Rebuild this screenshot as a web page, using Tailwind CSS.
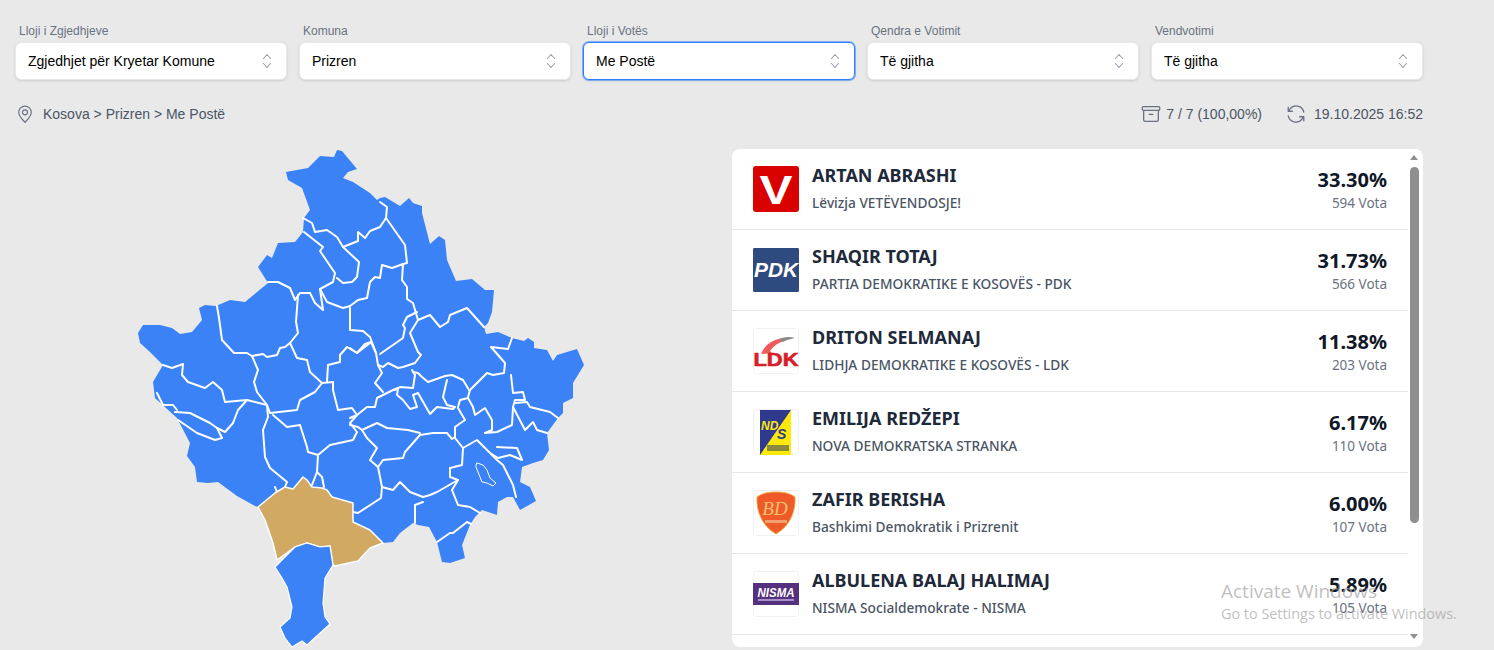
<!DOCTYPE html>
<html lang="en">
<head>
  <meta charset="UTF-8">
  <meta name="viewport" content="width=device-width, initial-scale=1.0">
  <title>Rezultatet</title>
  <script src="https://cdn.jsdelivr.net/npm/@tailwindcss/browser@4"></script>
</head>
<body class="bg-[#e9e9e9] h-[650px] overflow-hidden font-['Liberation_Sans',sans-serif]">
<div class="relative w-[1494px] h-[650px] overflow-hidden pl-[15px] pt-[24px]">

  <!-- filters -->
  <div class="grid grid-cols-5 gap-3 w-[1408px]">
    <div>
      <div class="text-xs leading-[14px] text-gray-500 px-1 mb-[4px]">Lloji i Zgjedhjeve</div>
      <button class="w-full h-[38px] bg-white rounded-md border border-gray-200 shadow-sm flex items-center justify-between pl-3 pr-[11px] text-sm text-black">
        <span>Zgjedhjet për Kryetar Komune</span>
        <svg class="w-[16px] h-[20px] text-gray-400" viewBox="0 0 16 20" fill="none" stroke="currentColor" stroke-width="1.100" stroke-linecap="round" stroke-linejoin="round"><path d="M4.500 7.500 8 3.500l3.500 4M4.500 12.500l3.500 4 3.500-4"/></svg>
      </button>
    </div>
    <div>
      <div class="text-xs leading-[14px] text-gray-500 px-1 mb-[4px]">Komuna</div>
      <button class="w-full h-[38px] bg-white rounded-md border border-gray-200 shadow-sm flex items-center justify-between pl-3 pr-[11px] text-sm text-black">
        <span>Prizren</span>
        <svg class="w-[16px] h-[20px] text-gray-400" viewBox="0 0 16 20" fill="none" stroke="currentColor" stroke-width="1.100" stroke-linecap="round" stroke-linejoin="round"><path d="M4.500 7.500 8 3.500l3.500 4M4.500 12.500l3.500 4 3.500-4"/></svg>
      </button>
    </div>
    <div>
      <div class="text-xs leading-[14px] text-gray-500 px-1 mb-[4px]">Lloji i Votës</div>
      <button class="w-full h-[38px] bg-white rounded-md border border-blue-500 ring-1 ring-blue-500/50 shadow-sm flex items-center justify-between pl-3 pr-[11px] text-sm text-black">
        <span>Me Postë</span>
        <svg class="w-[16px] h-[20px] text-gray-400" viewBox="0 0 16 20" fill="none" stroke="currentColor" stroke-width="1.100" stroke-linecap="round" stroke-linejoin="round"><path d="M4.500 7.500 8 3.500l3.500 4M4.500 12.500l3.500 4 3.500-4"/></svg>
      </button>
    </div>
    <div>
      <div class="text-xs leading-[14px] text-gray-500 px-1 mb-[4px]">Qendra e Votimit</div>
      <button class="w-full h-[38px] bg-white rounded-md border border-gray-200 shadow-sm flex items-center justify-between pl-3 pr-[11px] text-sm text-black">
        <span>Të gjitha</span>
        <svg class="w-[16px] h-[20px] text-gray-400" viewBox="0 0 16 20" fill="none" stroke="currentColor" stroke-width="1.100" stroke-linecap="round" stroke-linejoin="round"><path d="M4.500 7.500 8 3.500l3.500 4M4.500 12.500l3.500 4 3.500-4"/></svg>
      </button>
    </div>
    <div>
      <div class="text-xs leading-[14px] text-gray-500 px-1 mb-[4px]">Vendvotimi</div>
      <button class="w-full h-[38px] bg-white rounded-md border border-gray-200 shadow-sm flex items-center justify-between pl-3 pr-[11px] text-sm text-black">
        <span>Të gjitha</span>
        <svg class="w-[16px] h-[20px] text-gray-400" viewBox="0 0 16 20" fill="none" stroke="currentColor" stroke-width="1.100" stroke-linecap="round" stroke-linejoin="round"><path d="M4.500 7.500 8 3.500l3.500 4M4.500 12.500l3.500 4 3.500-4"/></svg>
      </button>
    </div>
  </div>

  <!-- breadcrumb and status -->
  <div class="w-[1408px] h-[20px] mt-[24px] flex items-center justify-between text-sm text-gray-600">
    <div class="flex items-center gap-[8px]">
      <svg class="w-[20px] h-[20px] text-gray-500" viewBox="0 0 24 24" fill="none" stroke="currentColor" stroke-width="1.400" stroke-linecap="round" stroke-linejoin="round"><path d="M19.500 10c0 5.500-5.500 9.500-7.500 12C10 19.500 4.500 15.500 4.500 10a7.500 7.500 0 0 1 15 0z"/><circle cx="12" cy="10" r="3"/></svg>
      <span>Kosova &gt; Prizren &gt; Me Postë</span>
    </div>
    <div class="flex items-center">
      <svg class="w-[22px] h-[22px] text-gray-500 mr-[4px]" viewBox="0 0 24 24" fill="none" stroke="currentColor" stroke-width="1.400" stroke-linecap="round" stroke-linejoin="round"><rect x="2.500" y="4" width="19" height="4" rx="1"/><path d="M4 8v10.500A1.500 1.500 0 0 0 5.500 20h13a1.500 1.500 0 0 0 1.500-1.500V8M10 12.500h4"/></svg>
      <span>7 / 7 (100,00%)</span>
      <svg class="w-[22px] h-[22px] text-gray-500 ml-[23px] mr-[7px]" viewBox="0 0 24 24" fill="none" stroke="currentColor" stroke-width="1.400" stroke-linecap="round" stroke-linejoin="round"><path d="M20.500 10A8.500 8.500 0 0 0 5.500 6.500L3.500 9M3.500 4.500V9H8M3.500 14a8.500 8.500 0 0 0 15 3.500l2-2.500M20.500 19.500V15H16"/></svg>
      <span>19.10.2025 16:52</span>
    </div>
  </div>

  <!-- map + results -->
  <div class="flex gap-3 mt-[25px]">
    <svg class="w-[705px] h-[501px] shrink-0" viewBox="15 149 705 501">
      <!-- country outline -->
      <polygon fill="#3b82f6" points="286,172 308,168 320,156 334,157 337,150 342,151 357,169 348,172 343,178 353,182 370,193 377,200 380,198 385,197 400,206 409,198 413,203 422,206 422,213 430,244 439,236 445,240 447,260 456,281 472,279 485,290 494,290 492,312 488,323 484,327 486,334 498,332 505,335 512,338 524,341 528,338 534,342 534,348 547,350 553,361 557,355 577,349 584,365 573,383 573,398 563,403 563,413 558,418 547,433 549,450 543,460 533,463 522,467 520,482 530,487 536,501 520,510 513,497 507,497 498,502 497,515 482,510 475,517 470,525 462,545 465,558 450,563 442,562 437,542 429,527 418,525 413,523 400,533 393,542 383,543 370,548 358,561 337,566 300,560 258,507 255,506 237,496 218,482 208,483 197,482 195,467 187,456 190,443 177,418 155,398 153,382 163,365 150,352 140,343 138,333 143,325 160,325 172,328 180,334 192,332 202,320 199,308 205,305 216,306 230,300 245,302 268,283 258,267 267,255 272,258 278,243 295,242 303,232 304,218 310,210 302,188 288,180"/>
      <!-- municipal borders -->
      <g fill="none" stroke="#fff" stroke-width="2" stroke-linejoin="round" stroke-linecap="round">
        <polyline points="303,218 312,223 315,232 327,230 337,237 343,247 358,241 358,232 365,238 370,231 380,227 386,218 387,207 380,202"/>
        <polyline points="304,232 323,247 320,251 335,273 333,282 320,289 327,302 343,308 350,306 358,300 367,298 370,282 375,277 380,278 382,265 392,268 403,264 402,280 407,287 407,299 413,303 418,320"/>
        <polyline points="343,247 359,262 357,277 352,282 343,283 337,278"/>
        <polyline points="386,218 405,245 407,263 403,264"/>
        <polyline points="268,282 278,282 290,288 295,300 300,293 310,293 315,303 323,310 320,289"/>
        <polyline points="298,295 296,322 298,333 290,343 285,347 280,348 277,355 267,357 263,354 252,356 247,353 234,353 222,340 219,318 217,306"/>
        <polyline points="290,343 297,358 307,360 310,372 322,383 333,382"/>
        <polyline points="370,343 357,353 347,347 340,355 340,362 328,365 327,382"/>
        <polyline points="350,308 350,330 363,331 370,337 376,353 378,365 382,373 375,383 383,392"/>
        <polyline points="350,348 357,353 365,344 371,342 376,353"/>
        <polyline points="380,354 403,338 405,328 403,325 407,317 417,312"/>
        <polyline points="418,320 410,333 418,352 421,355 415,363 403,367 398,368 388,363 383,367 378,365"/>
        <polyline points="418,320 430,315 440,327 448,322 450,315 467,308 484,327"/>
        <polyline points="512,338 508,349 491,347 505,363 504,373 493,375 487,373 470,390 468,397"/>
        <polyline points="413,372 418,373 422,377 428,382 445,376 452,375 463,380 469,390"/>
        <polyline points="412,370 415,375 413,388 400,387 395,390"/>
        <polyline points="350,418 357,415 367,407 375,407 377,398 393,390 398,388 397,395 403,400 410,409 417,407 413,395 418,393 430,414 437,407 453,409 455,407 447,405 443,397 447,380"/>
        <polyline points="458,407 460,400 468,398 473,407 475,415 485,408 492,420 492,430 485,433 497,432 512,425 513,407 515,400 525,400 523,392 513,393 511,375"/>
        <polyline points="515,403 527,402 530,407 550,412 558,418"/>
        <polyline points="513,407 525,430 533,422 537,430 547,433"/>
        <polyline points="458,408 465,420 455,427 455,438 463,448 477,440 490,453 497,460 503,465 513,485 516,497"/>
        <polyline points="497,447 517,448 522,460 510,455 498,458 490,453"/>
        <polyline points="463,448 462,465 450,468 450,477 458,480 452,490 458,505 470,507 480,513"/>
        <polyline points="458,480 437,492 430,495 423,497 410,492 400,482 393,490 382,487 378,467"/>
        <polyline points="423,502 415,505 415,523"/>
        <polyline points="437,542 450,533 453,533 467,522 471,524"/>
        <polyline points="382,487 381,498 358,513 353,512"/>
        <polyline points="378,467 383,460 403,458 405,452 420,435 433,433 447,433 452,439 455,437"/>
        <polyline points="378,467 370,460 377,448 367,438 362,430 377,423 387,428 408,430 420,433"/>
        <polyline points="350,425 358,427 362,430"/>
        <polyline points="163,365 172,368 183,364 182,375 188,382 205,388 213,382 222,390 225,402 247,400 238,410 233,423 225,432 217,428 210,423 190,413 175,412"/>
        <polyline points="178,420 197,433 215,440 222,438 217,428"/>
        <polyline points="157,393 163,405 173,405 177,410"/>
        <polyline points="247,400 267,405 268,417 263,430 265,457 270,468 287,482 285,487"/>
        <polyline points="275,487 277,492"/>
        <polyline points="267,405 270,413 297,410 300,400 315,392 322,383"/>
        <polyline points="273,415 287,427 300,425 307,447 308,452 318,455 330,445 353,440 357,432 350,423 357,415 352,408 338,410 333,390 333,382"/>
        <polyline points="318,455 317,472 312,485"/>
        <polyline points="317,472 322,477 324,487"/>
        <polyline points="252,356 258,370 254,382 257,392 267,405"/>
        <polygon stroke-width="1" points="477,463 483,465 487,470 490,478 496,483 493,486 487,483 482,482 478,472 476,467"/>
      </g>
      <!-- selected municipality -->
      <polygon fill="#d1a962" stroke="#fff" stroke-width="1.500" stroke-linejoin="round" points="258,507 275,493 285,487 293,489 303,477 307,480 312,487 322,488 327,490 332,497 353,503 353,522 370,530 383,543 370,548 358,561 335,566 333,565 330,546 320,547 307,543 295,547 277,560 273,543 265,520"/>
      <polygon fill="#3b82f6" stroke="#fff" stroke-width="1.200" stroke-linejoin="round" points="275,567 295,547 307,543 320,547 330,546 333,565 325,578 323,603 325,617 330,624 307,645 302,641 292,647 285,638 280,627 290,618 292,607 287,587 282,578"/>
    </svg>

    <!-- results card -->
    <div class="w-[691px] h-[498px] bg-white rounded-lg flex overflow-hidden font-['Noto_Sans',sans-serif]">
      <div id="results" class="w-[676px] shrink-0"></div>
      <div class="flex-1 flex flex-col items-center pr-[3px] pt-[6px]">
        <div class="w-0 h-0 border-x-[4px] border-x-transparent border-b-[5px] border-b-[#8f8f8f]"></div>
        <div class="w-[9px] h-[356px] mt-[7px] bg-[#8f8f8f] rounded-full"></div>
        <div class="w-0 h-0 mt-[111px] border-x-[4px] border-x-transparent border-t-[5px] border-t-[#8f8f8f]"></div>
      </div>
    </div>
  </div>

  <!-- windows watermark -->
  <div class="absolute left-[1221px] top-[578px] text-[#a3a3a3]/70 font-['Open_Sans',sans-serif] pointer-events-none">
    <div class="text-[19px] leading-[26px]">Activate Windows</div>
    <div class="text-[14.400px] leading-[20px]">Go to Settings to activate Windows.</div>
  </div>
</div>

<script>
  const logoBox = 'w-[46px] h-[46px] shrink-0 rounded-[3px] overflow-hidden';
  const logos = {
    vv: `<svg class="${logoBox}" viewBox="0 0 46 46"><rect width="46" height="46" fill="#d90000"/><text x="23" y="38" text-anchor="middle" font-family="Liberation Sans" font-weight="700" font-size="40" textLength="33" lengthAdjust="spacingAndGlyphs" fill="#fff">V</text></svg>`,
    pdk: `<svg class="${logoBox}" viewBox="0 0 46 46"><rect y="1" width="46" height="44" fill="#2f4a7f"/><text x="23" y="30" text-anchor="middle" font-family="Liberation Sans" font-weight="700" font-style="italic" font-size="20" textLength="44" lengthAdjust="spacingAndGlyphs" fill="#fff">PDK</text></svg>`,
    ldk: `<svg class="${logoBox}" viewBox="0 0 46 46"><rect x=".5" y=".5" width="45" height="45" rx="3" fill="#fff" stroke="#f0f0f0"/><path d="M10 22C16 13 26 9 40 10 30 12 22 16 17 23l2 2-11 1z" fill="#ee5a5a"/><path d="M26 11c5-2 10-3 16-1-5 1-9 2-12 4z" fill="#8a8a8a"/><text x="23" y="38" text-anchor="middle" font-family="Liberation Sans" font-weight="700" font-size="18" textLength="45" lengthAdjust="spacingAndGlyphs" stroke="#d5202a" stroke-width=".6" fill="#d5202a">LDK</text></svg>`,
    nds: `<svg class="${logoBox}" viewBox="0 0 46 46"><rect x=".5" y=".5" width="45" height="45" rx="3" fill="#fff" stroke="#f0f0f0"/><rect x="7" y="1" width="31" height="46" fill="#ffe90a"/><polygon points="7,1 38,1 7,46" fill="#2f3a8f"/><text x="8" y="21" font-family="Liberation Sans" font-weight="700" font-style="italic" font-size="12" fill="#ffe90a">ND</text><text x="24" y="30" font-family="Liberation Sans" font-weight="700" font-style="italic" font-size="14" fill="#2f3a8f">S</text><rect x="14" y="36" width="22" height="6" fill="#8a8a40"/></svg>`,
    bd: `<svg class="${logoBox}" viewBox="0 0 46 46"><rect x=".5" y=".5" width="45" height="45" rx="3" fill="#fff" stroke="#f0f0f0"/><path d="M23 2c7 0 14 1 19 5 1 14-5 29-19 37C9 36 3 21 4 7 9 3 16 2 23 2z" fill="#ef5a2a" stroke="#f0b040" stroke-width="1"/><text x="22" y="25" text-anchor="middle" font-family="Liberation Serif" font-style="italic" font-size="19" fill="#f7c26b">BD</text><rect x="12" y="30" width="22" height="3" fill="#f5a070"/></svg>`,
    nisma: `<svg class="${logoBox}" viewBox="0 0 46 46"><rect x=".5" y=".5" width="45" height="45" rx="3" fill="#fff" stroke="#f0f0f0"/><rect y="12" width="46" height="22" fill="#55307f"/><text x="23" y="26" text-anchor="middle" font-family="Liberation Sans" font-weight="700" font-style="italic" font-size="13" textLength="37" lengthAdjust="spacingAndGlyphs" fill="#fff">NISMA</text><rect x="5" y="28" width="36" height="2" fill="#a98fc9"/></svg>`
  };

  const candidates = [
    { name: 'ARTAN ABRASHI', party: 'Lëvizja VETËVENDOSJE!', pct: '33.30%', votes: 594, logo: 'vv' },
    { name: 'SHAQIR TOTAJ', party: 'PARTIA DEMOKRATIKE E KOSOVËS - PDK', pct: '31.73%', votes: 566, logo: 'pdk' },
    { name: 'DRITON SELMANAJ', party: 'LIDHJA DEMOKRATIKE E KOSOVËS - LDK', pct: '11.38%', votes: 203, logo: 'ldk' },
    { name: 'EMILIJA REDŽEPI', party: 'NOVA DEMOKRATSKA STRANKA', pct: '6.17%', votes: 110, logo: 'nds' },
    { name: 'ZAFIR BERISHA', party: 'Bashkimi Demokratik i Prizrenit', pct: '6.00%', votes: 107, logo: 'bd' },
    { name: 'ALBULENA BALAJ HALIMAJ', party: 'NISMA Socialdemokrate - NISMA', pct: '5.89%', votes: 105, logo: 'nisma' }
  ];

  document.getElementById('results').innerHTML = candidates.map(c => `
    <div class="h-[81px] border-b border-gray-200 flex items-center pl-[21px] pr-[21px]">
      ${logos[c.logo]}
      <div class="ml-[13px] flex-1 mb-[5px]">
        <div class="text-[18px] leading-[26px] font-bold text-gray-800">${c.name}</div>
        <div class="text-[13.700px] leading-[18px] mt-[6px] font-medium text-gray-600">${c.party}</div>
      </div>
      <div class="text-right mb-[1px]">
        <div class="text-[20px] leading-[28px] font-bold text-gray-900">${c.pct}</div>
        <div class="text-[13.500px] leading-[18px] text-gray-500">${c.votes} Vota</div>
      </div>
    </div>
  `).join('');
</script>
</body>
</html>
